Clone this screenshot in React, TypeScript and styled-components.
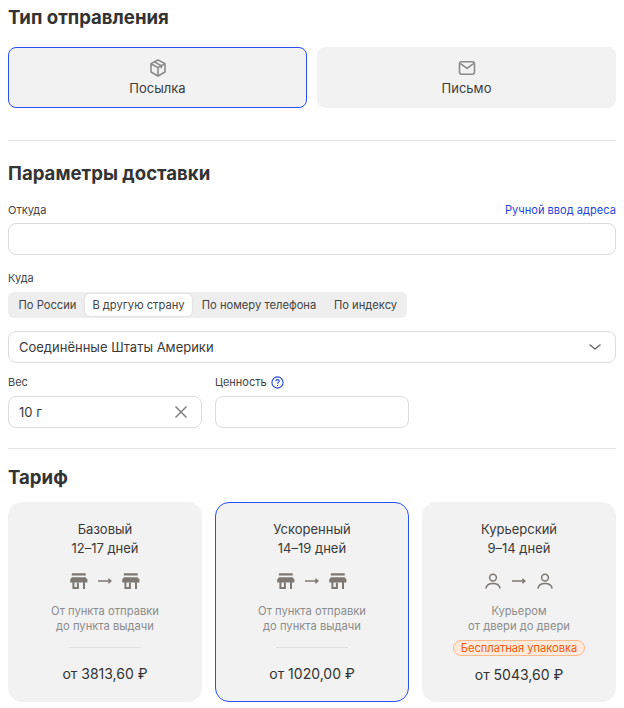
import styled, { createGlobalStyle } from "styled-components";

const GlobalStyle = createGlobalStyle`
  html, body {
    margin: 0;
    padding: 0;
    background: #fff;
    font-family: Inter, "Noto Sans", sans-serif;
    color: #333;
  }
  * { box-sizing: border-box; }
`;

const Page = styled.div`
  width: 624px;
  height: 708px;
  padding: 0 8px;
  overflow: hidden;
`;
const Heading = styled.h2<{ $top: number; $bottom: number }>`
  margin: ${(p) => p.$top}px 0 ${(p) => p.$bottom}px;
  height: 22px;
  font-size: 18.6px;
  line-height: 22px;
  font-weight: 700;
  color: #333;
`;
const Divider = styled.div<{ $top: number; $bottom: number }>`
  height: 1px;
  background: #e2e2e2;
  margin: ${(p) => p.$top}px 0 ${(p) => p.$bottom}px;
`;
const TypeRow = styled.div`
  display: grid;
  grid-template-columns: 299px 299px;
  gap: 10px;
`;
const TypeCard = styled.div<{ $active?: boolean }>`
  height: 61px;
  border-radius: 8px;
  background: #f2f2f2;
  border: 1px solid ${(p) => (p.$active ? "#2b4ff0" : "#f2f2f2")};
  display: flex;
  flex-direction: column;
  align-items: center;
  justify-content: center;
  gap: 1px;
  font-size: 13px;
  line-height: 18px;
  color: #3c3c3c;
  svg { display: block; }
`;
const LabelRow = styled.div<{ $gap?: number }>`
  display: flex;
  justify-content: space-between;
  align-items: center;
  height: 16px;
  margin-bottom: ${(p) => p.$gap ?? 5}px;
`;
const Label = styled.span`
  font-size: 11px;
  line-height: 16px;
  color: #444;
  display: inline-flex;
  align-items: center;
  gap: 4px;
`;
const LinkText = styled.a`
  font-size: 11.1px;
  line-height: 16px;
  color: #1f45d8;
`;
const Field = styled.div<{ $bottom?: number }>`
  height: 32px;
  border: 1px solid #dcdcdc;
  border-radius: 8px;
  background: #fff;
  display: flex;
  align-items: center;
  justify-content: space-between;
  padding: 0 13px 0 10px;
  font-size: 13px;
  color: #3a3a3a;
  margin-bottom: ${(p) => p.$bottom ?? 0}px;
`;
const Tabs = styled.div`
  display: inline-flex;
  height: 26px;
  padding: 2px;
  border-radius: 6px;
  background: #eeeeee;
  margin-bottom: 13px;
  width: 399px;
`;
const Tab = styled.div<{ $active?: boolean; $width: number }>`
  width: ${(p) => p.$width}px;
  flex: none;
  text-align: center;
  font-size: 11.2px;
  line-height: 22px;
  color: #444;
  border-radius: 5px;
  background: ${(p) => (p.$active ? "#fff" : "transparent")};
  box-shadow: ${(p) => (p.$active ? "0 0 3px rgba(0,0,0,0.1)" : "none")};
`;
const TwoCols = styled.div`
  display: grid;
  grid-template-columns: 194px 194px;
  gap: 13px;
`;
const Tariffs = styled.div`
  display: grid;
  grid-template-columns: repeat(3, 194px);
  gap: 13px;
`;
const Tariff = styled.div<{ $active?: boolean }>`
  height: 200px;
  border-radius: 14px;
  background: #f2f2f2;
  border: 1px solid ${(p) => (p.$active ? "#2b4ff0" : "#f2f2f2")};
  padding-top: 17px;
  display: flex;
  flex-direction: column;
  align-items: center;
`;
const TariffName = styled.div`
  font-size: 13px;
  line-height: 19px;
  color: #3a3a3a;
  text-align: center;
`;
const Route = styled.div`
  display: flex;
  align-items: center;
  gap: 10px;
  margin-top: 13px;
  height: 20px;
  svg { display: block; }
`;
const Note = styled.div`
  margin-top: 13px;
  font-size: 11.2px;
  line-height: 15px;
  color: #8c8c8c;
  text-align: center;
`;
const Line = styled.div`
  width: 72px;
  height: 1px;
  background: #e0e0e0;
  margin-top: 13px;
`;
const Badge = styled.div`
  margin-top: 6px;
  height: 16px;
  padding: 0 6.5px;
  border-radius: 8px;
  border: 1px solid #ffb98a;
  background: #ffeadb;
  color: #f45a0a;
  font-size: 11.1px;
  line-height: 14px;
  white-space: nowrap;
`;
const Price = styled.div<{ $top: number }>`
  margin-top: ${(p) => p.$top}px;
  font-size: 14px;
  line-height: 18px;
  color: #333;
`;

const BoxIcon = () => (
  <svg width="20" height="20" viewBox="0 0 20 20" fill="none" stroke="#8a8a8a" strokeWidth="1.6" strokeLinejoin="round">
    <path d="M10 2l7 3.6v8.4L10 18l-7-4V5.6z" />
    <path d="M3 5.8l7 3.8 7-3.8M10 9.6V18M6.4 3.9l7 3.8v2.6" />
  </svg>
);
const MailIcon = () => (
  <svg width="20" height="20" viewBox="0 0 20 20" fill="none" stroke="#8a8a8a" strokeWidth="1.6" strokeLinejoin="round">
    <rect x="2.5" y="3.8" width="15" height="12.4" rx="2.2" />
    <path d="M3.5 5.6L10 10.4l6.5-4.8" />
  </svg>
);
const ChevronIcon = () => (
  <svg width="14" height="14" viewBox="0 0 14 14" fill="none" stroke="#666" strokeWidth="1.5" strokeLinecap="round" strokeLinejoin="round">
    <path d="M2 5l5 4 5-4" />
  </svg>
);
const CloseIcon = () => (
  <svg width="14" height="14" viewBox="0 0 14 14" fill="none" stroke="#808080" strokeWidth="1.5">
    <path d="M1.5 1.5l11 11M12.5 1.5l-11 11" />
  </svg>
);
const HelpIcon = () => (
  <svg width="13" height="13" viewBox="0 0 13 13" fill="none" stroke="#1f45d8" strokeWidth="1.1">
    <circle cx="6.5" cy="6.5" r="5.6" />
    <path d="M4.8 5.2c0-1 .8-1.6 1.7-1.6s1.7.6 1.7 1.5c0 1.3-1.7 1.3-1.7 2.6" />
    <path d="M6.5 9v.9" />
  </svg>
);
const ShopIcon = () => (
  <svg width="18" height="18" viewBox="0 0 18 18" fill="none">
    <rect x="1.8" y="1.3" width="14" height="2.2" rx="0.6" fill="#7d7873" />
    <path d="M2 5.2h13.6l1.8 2.2v3H.2v-3z" fill="#7d7873" />
    <path d="M3.4 10v7M7.9 10.5v5.6H4M14 10v7" stroke="#7d7873" strokeWidth="2" />
  </svg>
);
const PersonIcon = () => (
  <svg width="18" height="18" viewBox="0 0 18 18" fill="none" stroke="#7d7873" strokeWidth="1.5">
    <circle cx="9" cy="5.6" r="3.4" />
    <path d="M2 16c.6-3 3.4-4.6 7-4.6s6.4 1.6 7 4.6" strokeLinecap="round" />
  </svg>
);
const ArrowIcon = () => (
  <svg width="14" height="10" viewBox="0 0 14 10" fill="none" stroke="#7d7873" strokeWidth="1.5">
    <path d="M0 5h12.5M10.4 2.8L12.8 5l-2.4 2.2" />
  </svg>
);

const tabs = [
  { title: "По России", width: 75 },
  { title: "В другую страну", width: 107 },
  { title: "По номеру телефона", width: 134 },
  { title: "По индексу", width: 79 },
];

const tariffs = [
  { name: "Базовый", days: "12–17 дней", note: ["От пункта отправки", "до пункта выдачи"], price: "от 3813,60 ₽", kind: "shop" },
  { name: "Ускоренный", days: "14–19 дней", note: ["От пункта отправки", "до пункта выдачи"], price: "от 1020,00 ₽", kind: "shop", active: true },
  { name: "Курьерский", days: "9–14 дней", note: ["Курьером", "от двери до двери"], price: "от 5043,60 ₽", kind: "person" },
];

export default function App() {
  return (
    <Page>
      <GlobalStyle />
      <Heading $top={6} $bottom={19}>Тип отправления</Heading>
      <TypeRow>
        <TypeCard $active>
          <BoxIcon />
          Посылка
        </TypeCard>
        <TypeCard>
          <MailIcon />
          Письмо
        </TypeCard>
      </TypeRow>
      <Divider $top={32} $bottom={21} />
      <Heading $top={0} $bottom={18}>Параметры доставки</Heading>
      <LabelRow>
        <Label>Откуда</Label>
        <LinkText>Ручной ввод адреса</LinkText>
      </LabelRow>
      <Field $bottom={15} />
      <LabelRow $gap={6}>
        <Label>Куда</Label>
      </LabelRow>
      <Tabs>
        {tabs.map((t, i) => (
          <Tab key={t.title} $active={i === 1} $width={t.width}>{t.title}</Tab>
        ))}
      </Tabs>
      <Field $bottom={11}>
        Соединённые Штаты Америки
        <ChevronIcon />
      </Field>
      <TwoCols>
        <div>
          <LabelRow $gap={6}>
            <Label>Вес</Label>
          </LabelRow>
          <Field>
            10 г
            <CloseIcon />
          </Field>
        </div>
        <div>
          <LabelRow $gap={6}>
            <Label>Ценность <HelpIcon /></Label>
          </LabelRow>
          <Field />
        </div>
      </TwoCols>
      <Divider $top={20} $bottom={17} />
      <Heading $top={0} $bottom={14}>Тариф</Heading>
      <Tariffs>
        {tariffs.map((t) => {
          const Icon = t.kind === "shop" ? ShopIcon : PersonIcon;
          return (
            <Tariff key={t.name} $active={t.active}>
              <TariffName>{t.name}<br />{t.days}</TariffName>
              <Route>
                <Icon />
                <ArrowIcon />
                <Icon />
              </Route>
              <Note>{t.note[0]}<br />{t.note[1]}</Note>
              {t.kind === "shop" ? <Line /> : <Badge>Бесплатная упаковка</Badge>}
              <Price $top={t.kind === "shop" ? 17 : 10}>{t.price}</Price>
            </Tariff>
          );
        })}
      </Tariffs>
    </Page>
  );
}
